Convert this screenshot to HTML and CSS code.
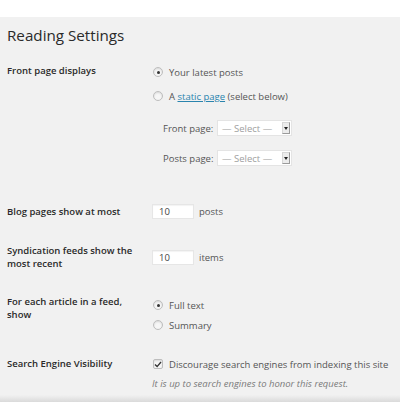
FILE: index.html
```html
<!DOCTYPE html>
<html lang="en">
<head>
<meta charset="utf-8">
<title>Reading Settings</title>
<link rel="stylesheet" href="styles.css">
</head>
<body>
<div class="panel">
  <h1 class="title">Reading Settings</h1>

  <div class="row row-front">
    <div class="label">Front page displays</div>
    <div class="fields">
      <div class="opt opt-first"><span class="radio checked"></span>Your latest posts</div>
      <div class="opt opt-second"><span class="radio"></span>A&nbsp;<a class="link" href="#">static page</a>&nbsp;(select below)</div>
      <div class="sel-line sel-first"><span class="sel-label">Front page:</span><span class="select"><span class="sel-text">— Select —</span><span class="sel-btn"></span></span></div>
      <div class="sel-line sel-second"><span class="sel-label">Posts page:</span><span class="select"><span class="sel-text">— Select —</span><span class="sel-btn"></span></span></div>
    </div>
  </div>

  <div class="row row-blog">
    <div class="label label-single">Blog pages show at most</div>
    <div class="fields">
      <div class="num-line"><span class="num">10</span>posts</div>
    </div>
  </div>

  <div class="row row-synd">
    <div class="label">Syndication feeds show the most recent</div>
    <div class="fields">
      <div class="num-line num-offset"><span class="num">10</span>items</div>
    </div>
  </div>

  <div class="row row-feed">
    <div class="label">For each article in a feed, show</div>
    <div class="fields">
      <div class="opt opt-feed1"><span class="radio checked"></span>Full text</div>
      <div class="opt opt-feed2"><span class="radio"></span>Summary</div>
    </div>
  </div>

  <div class="row row-search">
    <div class="label">Search Engine Visibility</div>
    <div class="fields">
      <div class="opt opt-check"><span class="check"><svg width="8" height="7" viewBox="0 0 8 7"><path d="M1 3.6 L3.1 5.6 L7 1" fill="none" stroke="#333" stroke-width="1.4"/></svg></span>Discourage search engines from indexing this site</div>
      <div class="desc">It is up to search engines to honor this request.</div>
    </div>
  </div>
</div>
</body>
</html>
```

FILE: styles.css
```css
html, body {
  margin: 0;
  padding: 0;
  background: #ffffff;
}

body {
  font-family: "Open Sans", "Liberation Sans", sans-serif;
  font-size: 9.5px;
  line-height: 13px;
  color: #555;
}

.panel {
  margin-top: 17px;
  height: 385px;
  box-sizing: border-box;
  padding: 6px 0 0 7px;
  background: linear-gradient(to bottom, #f1f1f1 0, #f1f1f1 calc(100% - 7px), #dadada 100%);
}

.title {
  margin: 0;
  font-size: 15.2px;
  line-height: 24px;
  font-weight: 400;
  color: #2a2a2a;
}

.row {
  display: grid;
  grid-template-columns: 145px 1fr;
  align-items: start;
}

.label {
  width: 132px;
  font-weight: 600;
  color: #2a2a2a;
}

.label-single {
  padding-top: 1px;
}

.row-front { margin-top: 17px; }
.row-blog { margin-top: 38px; }
.row-synd { margin-top: 25px; }
.row-feed { margin-top: 25px; }
.row-search { margin-top: 24px; }

.fields {
  display: flex;
  flex-direction: column;
}

.opt {
  display: flex;
  align-items: center;
  height: 16px;
  color: #555;
}

.opt-second { margin-top: 8px; }
.opt-feed1 { margin-top: 2px; }
.opt-feed2 { margin-top: 4px; }
.opt-check { height: 14px; }

.radio {
  box-sizing: border-box;
  width: 10px;
  height: 10px;
  margin: 0 6px 0 1px;
  border: 1px solid #bdbdbd;
  border-radius: 50%;
  background: #f6f6f6;
  box-shadow: inset 0 1px 2px rgba(0, 0, 0, 0.12);
  display: flex;
  align-items: center;
  justify-content: center;
}

.radio.checked::after {
  content: "";
  width: 3px;
  height: 3px;
  border-radius: 50%;
  background: #333;
}

.check {
  box-sizing: border-box;
  width: 10px;
  height: 10px;
  margin: 0 6px 0 1px;
  border: 1px solid #bdbdbd;
  border-radius: 2px;
  background: #f6f6f6;
  box-shadow: inset 0 1px 2px rgba(0, 0, 0, 0.12);
  display: flex;
  align-items: center;
  justify-content: center;
}

.check svg {
  display: block;
}

.link {
  color: #2a84ae;
  text-decoration: underline;
}

.sel-line {
  display: flex;
  align-items: center;
  height: 16px;
  padding-left: 11px;
}

.sel-first { margin-top: 16px; }
.sel-second { margin-top: 14px; }

.sel-label {
  width: 54px;
  color: #555;
}

.select {
  box-sizing: border-box;
  width: 75px;
  height: 16px;
  display: flex;
  align-items: center;
  justify-content: space-between;
  background: #fff;
  border: 1px solid #e4e4e4;
  padding: 0 1px 0 4px;
}

.sel-text {
  color: #a0a0a0;
}

.sel-btn {
  box-sizing: border-box;
  width: 8px;
  height: 12px;
  background: #ececec;
  border: 1px solid #d6d6d6;
  border-right-color: #9a9a9a;
  border-bottom-color: #9a9a9a;
  display: flex;
  align-items: center;
  justify-content: center;
}

.sel-btn::after {
  content: "";
  width: 0;
  height: 0;
  border-left: 2px solid transparent;
  border-right: 2px solid transparent;
  border-top: 3px solid #222;
}

.num-line {
  display: flex;
  align-items: center;
  height: 15px;
  color: #555;
}

.num-offset { margin-top: 6px; }

.num {
  box-sizing: border-box;
  width: 42px;
  height: 15px;
  margin-right: 5px;
  padding-left: 6px;
  background: #fff;
  border: 1px solid #e6e6e6;
  box-shadow: inset 0 1px 1px rgba(0, 0, 0, 0.05);
  color: #444;
  line-height: 13px;
}

.desc {
  margin-top: 6px;
  font-style: italic;
  color: #7a7a7a;
}
```
